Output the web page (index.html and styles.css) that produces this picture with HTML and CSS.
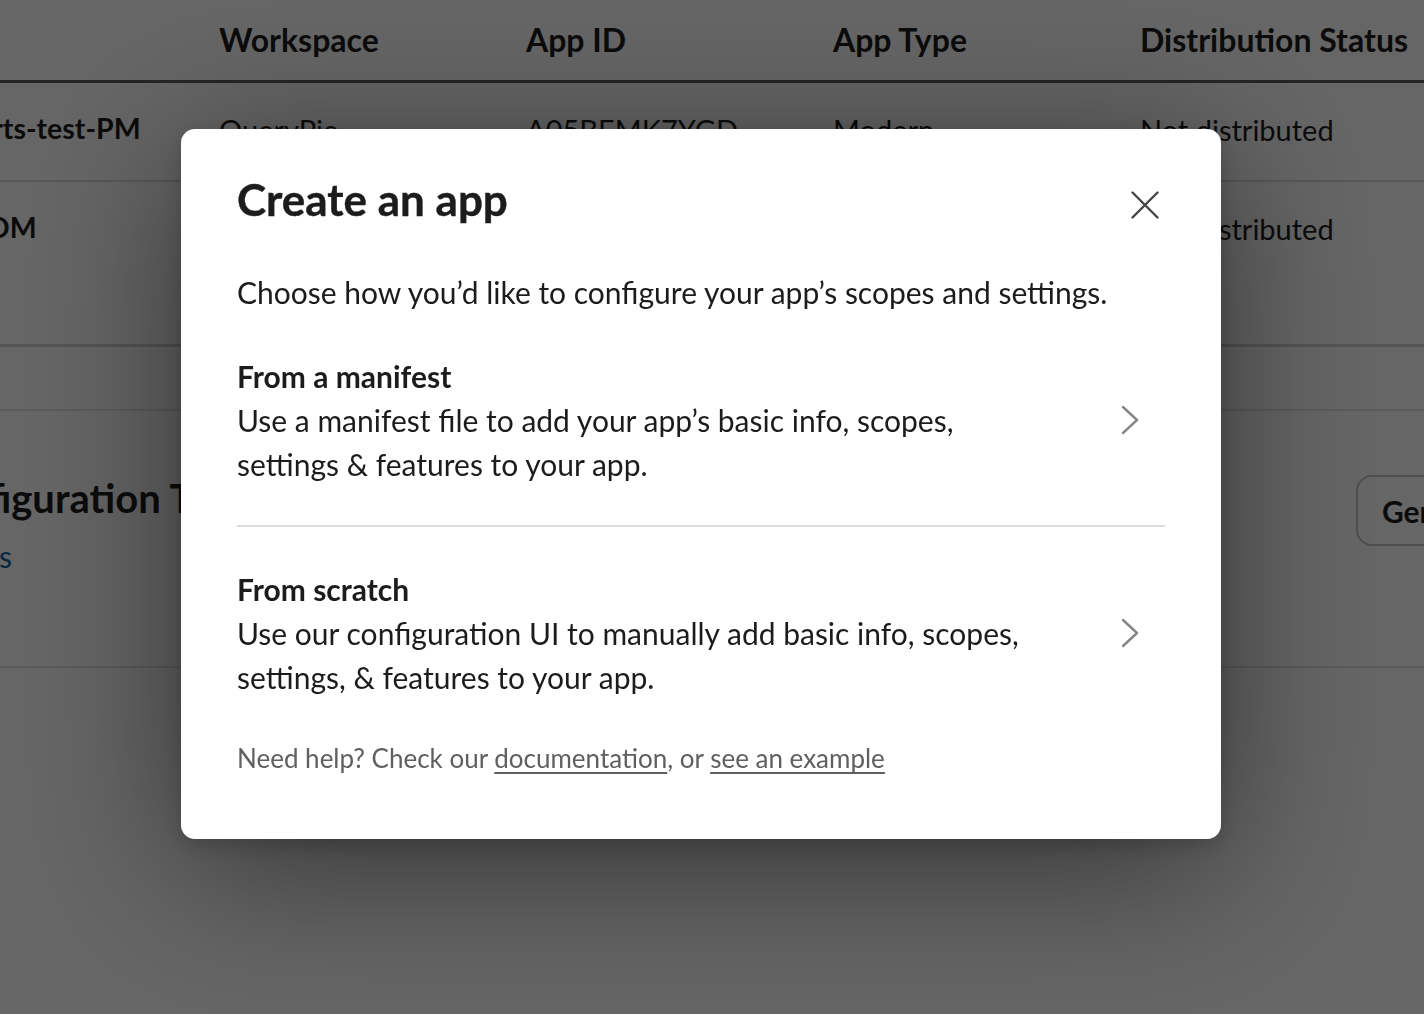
FILE: index.html
```html
<!DOCTYPE html>
<html lang="en">
<head>
<meta charset="utf-8">
<title>Your Apps</title>
<link rel="stylesheet" href="styles.css">
</head>
<body>
<main class="page">
  <div class="apps-table">
    <div class="row head">
      <div class="cell"></div>
      <div class="cell">Workspace</div>
      <div class="cell">App ID</div>
      <div class="cell">App Type</div>
      <div class="cell">Distribution Status</div>
    </div>
    <div class="row">
      <div class="cell name">Supports-test-PM</div>
      <div class="cell">QueryPie</div>
      <div class="cell">A05BEMK7YGD</div>
      <div class="cell">Modern</div>
      <div class="cell">Not distributed</div>
    </div>
    <div class="row tall">
      <div class="cell name">Slack-DM</div>
      <div class="cell">QueryPie</div>
      <div class="cell">A05C2RT9QKL</div>
      <div class="cell">Modern</div>
      <div class="cell">Not distributed</div>
    </div>
  </div>
  <div class="table-foot"></div>
  <section class="tokens">
    <div class="tokens-text">
      <h2 class="tokens-title">Configuration Tokens</h2>
      <a class="tokens-link" href="#">Tokens</a>
    </div>
    <div class="tokens-action">
      <button class="btn" type="button">Generate Token</button>
    </div>
  </section>
</main>

<div class="overlay">
  <div class="modal" role="dialog" aria-label="Create an app">
    <header class="modal-head">
      <h1 class="modal-title">Create an app</h1>
      <button class="close" type="button" aria-label="Close">
        <svg width="28" height="28" viewBox="0 0 28 28"><path d="M1.5 1.5 L26.5 26.5 M26.5 1.5 L1.5 26.5" stroke="#454545" stroke-width="2.4" stroke-linecap="round" fill="none"/></svg>
      </button>
    </header>
    <p class="intro">Choose how you’d like to configure your app’s scopes and settings.</p>
    <ul class="options">
      <li class="option">
        <div class="opt-text">
          <h2 class="opt-title">From a manifest</h2>
          <p class="opt-desc">Use a manifest file to add your app’s basic info, scopes, settings &amp; features to your app.</p>
        </div>
        <svg class="chev" width="18" height="30" viewBox="0 0 18 30"><path d="M2 2 L16 15 L2 28" stroke="#868686" stroke-width="2.4" stroke-linecap="round" stroke-linejoin="round" fill="none"/></svg>
      </li>
      <li class="option">
        <div class="opt-text">
          <h2 class="opt-title">From scratch</h2>
          <p class="opt-desc">Use our configuration UI to manually add basic info, scopes, settings, &amp; features to your app.</p>
        </div>
        <svg class="chev" width="18" height="30" viewBox="0 0 18 30"><path d="M2 2 L16 15 L2 28" stroke="#868686" stroke-width="2.4" stroke-linecap="round" stroke-linejoin="round" fill="none"/></svg>
      </li>
    </ul>
    <p class="help">Need help? Check our <a href="#">documentation</a>, or <a href="#">see an example</a></p>
  </div>
</div>
</body>
</html>
```

FILE: styles.css
```css
* { box-sizing: border-box; }

html, body {
  margin: 0;
  padding: 0;
  height: 100%;
  overflow: hidden;
  background: #ffffff;
  font-family: Lato, "Noto Sans", sans-serif;
  color: #1d1c1d;
}

.page {
  margin-left: -88px;
  width: 1800px;
}

.apps-table .row {
  display: grid;
  grid-template-columns: repeat(5, 307px);
  align-items: start;
  font-size: 29px;
  line-height: 44px;
  padding: 25px 0 28px;
  border-bottom: 2px solid #dedede;
}

.apps-table .row.head {
  font-size: 32px;
  font-weight: 700;
  padding: 18px 0 18px;
  border-bottom: 3px solid #5e5d60;
}

.apps-table .row.tall {
  min-height: 165px;
  border-bottom: 3px solid #d4d4d4;
}

.cell { white-space: nowrap; }
.cell.name { font-weight: 700; font-size: 28.5px; line-height: 40px; }

.table-foot {
  height: 64px;
  border-bottom: 2px solid #e6e6e6;
}

.tokens {
  display: grid;
  grid-template-columns: 1444px auto;
  align-items: start;
  height: 257px;
  padding-top: 61px;
  border-bottom: 2px solid #e6e6e6;
}

.tokens-text { padding-left: 4px; }

.tokens-title {
  margin: 0;
  font-size: 40px;
  line-height: 52px;
  font-weight: 700;
}

.tokens-link {
  display: block;
  margin-top: 10px;
  padding-left: 5px;
  font-size: 30px;
  line-height: 44px;
  color: #1264a3;
  text-decoration: none;
}

.tokens-action { padding-top: 3px; }

.btn {
  height: 71px;
  padding: 0 24px;
  border: 2px solid #c4c4c4;
  border-radius: 16px;
  background: #fff;
  font-family: inherit;
  font-size: 30px;
  font-weight: 700;
  color: #1d1c1d;
}

/* overlay + modal */
.overlay {
  position: fixed;
  inset: 0;
  background: rgba(0, 0, 0, 0.6);
  display: flex;
  align-items: flex-start;
  padding: 129px 0 0 181px;
}

.modal {
  width: 1040px;
  background: #ffffff;
  border-radius: 14px;
  padding: 42px 56px 61px;
  box-shadow: 0 28px 160px rgba(0, 0, 0, 0.5), 0 6px 20px rgba(0, 0, 0, 0.18);
}

.modal-head {
  display: flex;
  justify-content: space-between;
  align-items: flex-start;
}

.modal-title {
  margin: 0;
  font-size: 44px;
  line-height: 56px;
  font-weight: 700;
  color: #1d1c1d;
  -webkit-text-stroke: 0.4px #1d1c1d;
}

.close {
  width: 40px;
  height: 40px;
  margin-top: 14px;
  padding: 0;
  border: 0;
  background: transparent;
  display: flex;
  align-items: center;
  justify-content: center;
}

.intro {
  margin: 43px 0 0;
  font-size: 30px;
  line-height: 44px;
}

.options {
  list-style: none;
  margin: 0;
  padding: 0;
}

.option {
  display: flex;
  align-items: center;
  justify-content: space-between;
  padding: 40px 0 39px;
}

.option + .option { border-top: 2px solid #dddddd; }

.opt-text { max-width: 820px; }

.opt-title {
  margin: 0;
  font-size: 30px;
  line-height: 44px;
  font-weight: 700;
}

.opt-desc {
  margin: 0;
  font-size: 30px;
  line-height: 44px;
}

.chev { margin-right: 26px; flex-shrink: 0; }

.help {
  margin: 0;
  font-size: 26px;
  line-height: 40px;
  color: #616061;
}

.help a { color: #616061; text-decoration: underline; text-underline-offset: 4px; }
```
